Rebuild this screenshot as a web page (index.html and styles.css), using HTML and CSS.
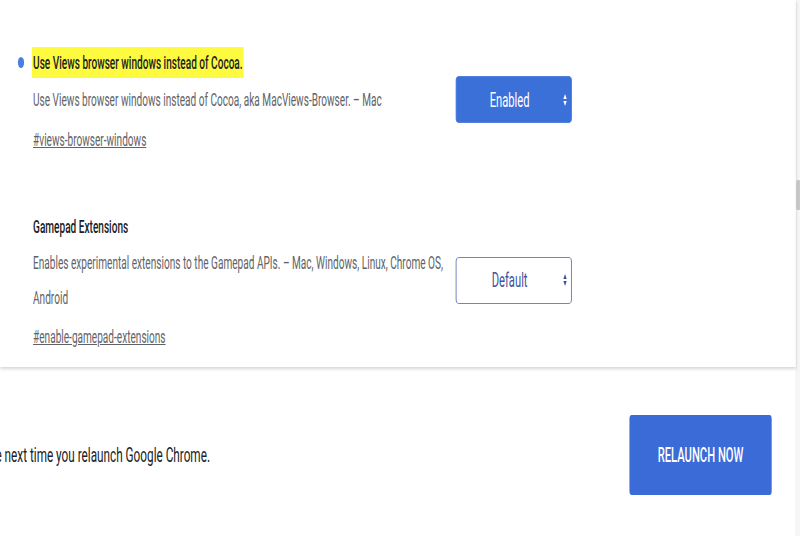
FILE: index.html
```html
<!DOCTYPE html>
<html lang="en">
  <head>
    <meta charset="UTF-8" />
    <meta name="viewport" content="width=device-width, initial-scale=1.0" />
    <title>Experiments</title>
    <link rel="stylesheet" href="styles.css">
</head>
<body>
    <div class="page">
        <main class="flags">
            <section class="card">
                <div class="experiment">
                    <h2 class="name"><span class="dot"></span><span class="hl">Use Views browser windows instead of Cocoa.</span></h2>
                    <div class="row">
                        <p class="desc">Use Views browser windows instead of Cocoa, aka MacViews-Browser. – Mac</p>
                        <div class="select enabled">
                            <span class="label">Enabled</span>
                            <svg class="arrows" viewBox="0 0 8 16"><path d="M1 7 L4 2 L7 7 Z M1 9 L4 14 L7 9 Z"/></svg>
                        </div>
                    </div>
                    <a class="perma" href="#views-browser-windows">#views-browser-windows</a>
                </div>

                <div class="experiment">
                    <h2 class="name"><span class="hl plain">Gamepad Extensions</span></h2>
                    <div class="row">
                        <p class="desc">Enables experimental extensions to the Gamepad APIs. – Mac, Windows, Linux, Chrome OS, Android</p>
                        <div class="select">
                            <span class="label">Default</span>
                            <svg class="arrows" viewBox="0 0 8 16"><path d="M1 7 L4 2 L7 7 Z M1 9 L4 14 L7 9 Z"/></svg>
                        </div>
                    </div>
                    <a class="perma" href="#enable-gamepad-extensions">#enable-gamepad-extensions</a>
                </div>
            </section>

            <footer class="relaunch">
                <div class="msg"><span>Your changes will take effect the next time you relaunch Google Chrome.</span></div>
                <button class="relaunch-btn">RELAUNCH NOW</button>
            </footer>
        </main>
        <div class="scrollbar"><div class="thumb"></div></div>
    </div>
</body>
</html>
```

FILE: styles.css
```css
html, body {
    margin: 0;
    height: 100%;
    overflow: hidden;
    background: #fff;
}

body {
    font-family: Roboto, "Liberation Sans", sans-serif;
    color: #202124;
}

/* the shot is squeezed sideways, so the whole page is drawn wide and scaled */
.page {
    width: 1429px;
    height: 536px;
    display: flex;
    transform: scaleX(0.56);
    transform-origin: 0 0;
}

.flags {
    flex: 1;
    display: flex;
    flex-direction: column;
}

.card {
    padding: 44px 0 12px 59px;
    background: #fff;
    box-shadow: 0 2px 4px rgba(0, 0, 0, 0.16);
    position: relative;
    z-index: 1;
}

.experiment + .experiment {
    margin-top: 50px;
}

.name {
    margin: 0;
    height: 37px;
    display: flex;
    align-items: center;
    margin-left: -27px;
    font-size: 18px;
    font-weight: 500;
}

.dot {
    width: 11px;
    height: 11px;
    border-radius: 50%;
    background: #4a7fe2;
    margin-right: 14px;
}

.hl {
    background: #fdfa40;
    padding: 5px 2px;
    line-height: 21px;
}

.hl.plain {
    background: none;
    margin-left: 25px;
}

.row {
    display: flex;
    align-items: center;
}

.desc {
    margin: 0;
    width: 745px;
    margin-right: 10px;
    font-size: 18px;
    line-height: 35px;
    color: #5f6368;
}

.select {
    width: 207px;
    height: 47px;
    margin: -5px 0;
    box-sizing: border-box;
    border: 1px solid #4d62a6;
    border-radius: 5px;
    display: flex;
    align-items: center;
    padding-right: 7px;
    color: #3f519e;
    background: #fff;
    font-size: 20px;
}

.select.enabled {
    background: #3c70d9;
    border-color: #3c70d9;
    color: #fff;
}

.label {
    flex: 1;
    text-align: center;
}

.arrows {
    width: 8px;
    height: 16px;
    fill: currentColor;
}

.perma {
    display: block;
    margin-top: 3px;
    font-size: 18px;
    line-height: 37px;
    color: #5f6368;
    text-decoration: underline;
}

.relaunch {
    flex: 1;
    display: flex;
    align-items: flex-start;
    justify-content: space-between;
    padding: 48px 43px 0 0;
}

.msg {
    width: 375px;
    height: 80px;
    display: flex;
    align-items: center;
    justify-content: flex-end;
    white-space: nowrap;
    font-size: 21px;
    color: #202124;
}

.relaunch-btn {
    width: 254px;
    height: 80px;
    border: none;
    border-radius: 4px;
    background: #3a6bd6;
    color: #fff;
    font-family: Roboto, "Liberation Sans", sans-serif;
    font-size: 20px;
    font-weight: 500;
    cursor: pointer;
}

.scrollbar {
    width: 7px;
    background: #f6f6f6;
    border-left: 1px solid #ececec;
}

.thumb {
    margin-top: 180px;
    height: 30px;
    background: #c9c9c9;
    border-radius: 2px;
}
```
